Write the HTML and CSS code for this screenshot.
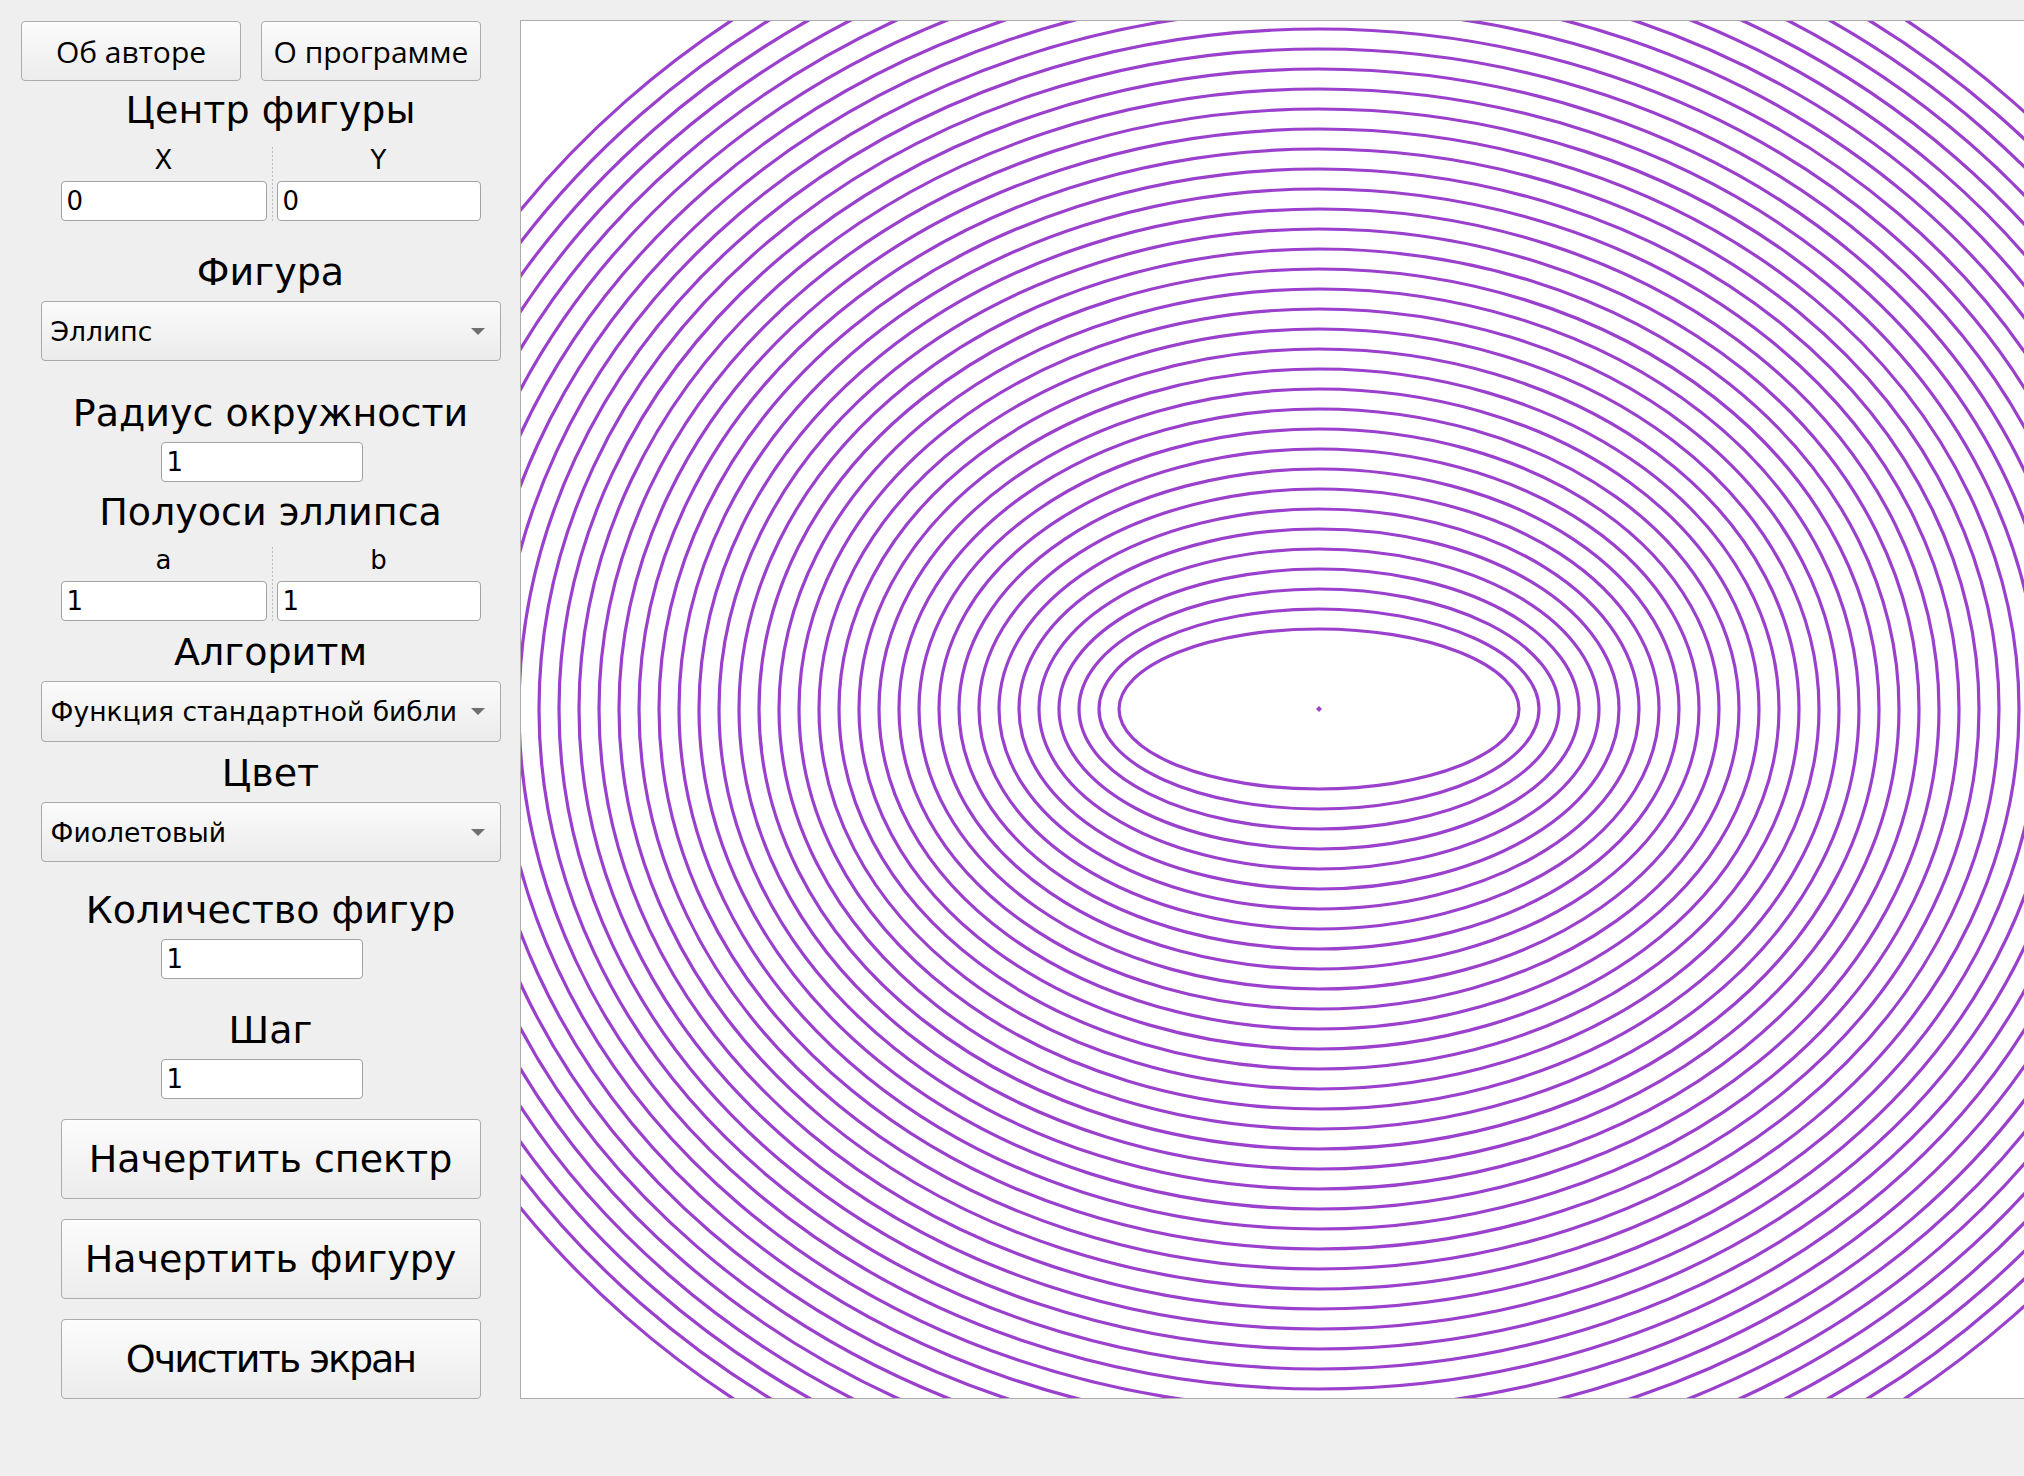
FILE: index.html
```html
<!DOCTYPE html>
<html lang="ru">
<head>
<meta charset="utf-8">
<title>Спектр фигур</title>
<link rel="stylesheet" href="styles.css">
</head>
<body>
<div class="app">
  <aside class="panel">
    <div class="top-row">
      <button class="btn btn-small">Об авторе</button>
      <button class="btn btn-small">О программе</button>
    </div>

    <div class="title t-center">Центр фигуры</div>
    <div class="pair pair-center">
      <div class="col col-a">
        <div class="sub">X</div>
        <div class="field"><span class="val">0</span></div>
      </div>
      <div class="sep"></div>
      <div class="col col-b">
        <div class="sub">Y</div>
        <div class="field"><span class="val">0</span></div>
      </div>
    </div>

    <div class="title t-figure">Фигура</div>
    <div class="combo"><span class="combo-text">Эллипс</span><span class="arrow"></span></div>

    <div class="title t-radius">Радиус окружности</div>
    <div class="field field-single"><span class="val">1</span></div>

    <div class="title t-axes">Полуоси эллипса</div>
    <div class="pair pair-axes">
      <div class="col col-a">
        <div class="sub">a</div>
        <div class="field"><span class="val">1</span></div>
      </div>
      <div class="sep"></div>
      <div class="col col-b">
        <div class="sub">b</div>
        <div class="field"><span class="val">1</span></div>
      </div>
    </div>

    <div class="title t-algo">Алгоритм</div>
    <div class="combo combo-tall"><span class="combo-text">Функция стандартной библи</span><span class="arrow"></span></div>

    <div class="title t-color">Цвет</div>
    <div class="combo"><span class="combo-text">Фиолетовый</span><span class="arrow"></span></div>

    <div class="title t-count">Количество фигур</div>
    <div class="field field-single"><span class="val">1</span></div>

    <div class="title t-step">Шаг</div>
    <div class="field field-single"><span class="val">1</span></div>

    <div class="actions">
      <button class="btn btn-big">Начертить спектр</button>
      <button class="btn btn-big">Начертить фигуру</button>
      <button class="btn btn-big btn-tight">Очистить экран</button>
    </div>
  </aside>

  <main class="canvas">
    <svg class="drawing" width="1600" height="1377" viewBox="0 0 1600 1377" xmlns="http://www.w3.org/2000/svg">
      <g fill="none" stroke="#9a40cd" stroke-width="3.2">
        <ellipse cx="798" cy="688" rx="200" ry="80"/>
        <ellipse cx="798" cy="688" rx="220" ry="100"/>
        <ellipse cx="798" cy="688" rx="240" ry="120"/>
        <ellipse cx="798" cy="688" rx="260" ry="140"/>
        <ellipse cx="798" cy="688" rx="280" ry="160"/>
        <ellipse cx="798" cy="688" rx="300" ry="180"/>
        <ellipse cx="798" cy="688" rx="320" ry="200"/>
        <ellipse cx="798" cy="688" rx="340" ry="220"/>
        <ellipse cx="798" cy="688" rx="360" ry="240"/>
        <ellipse cx="798" cy="688" rx="380" ry="260"/>
        <ellipse cx="798" cy="688" rx="400" ry="280"/>
        <ellipse cx="798" cy="688" rx="420" ry="300"/>
        <ellipse cx="798" cy="688" rx="440" ry="320"/>
        <ellipse cx="798" cy="688" rx="460" ry="340"/>
        <ellipse cx="798" cy="688" rx="480" ry="360"/>
        <ellipse cx="798" cy="688" rx="500" ry="380"/>
        <ellipse cx="798" cy="688" rx="520" ry="400"/>
        <ellipse cx="798" cy="688" rx="540" ry="420"/>
        <ellipse cx="798" cy="688" rx="560" ry="440"/>
        <ellipse cx="798" cy="688" rx="580" ry="460"/>
        <ellipse cx="798" cy="688" rx="600" ry="480"/>
        <ellipse cx="798" cy="688" rx="620" ry="500"/>
        <ellipse cx="798" cy="688" rx="640" ry="520"/>
        <ellipse cx="798" cy="688" rx="660" ry="540"/>
        <ellipse cx="798" cy="688" rx="680" ry="560"/>
        <ellipse cx="798" cy="688" rx="700" ry="580"/>
        <ellipse cx="798" cy="688" rx="720" ry="600"/>
        <ellipse cx="798" cy="688" rx="740" ry="620"/>
        <ellipse cx="798" cy="688" rx="760" ry="640"/>
        <ellipse cx="798" cy="688" rx="780" ry="660"/>
        <ellipse cx="798" cy="688" rx="800" ry="680"/>
        <ellipse cx="798" cy="688" rx="820" ry="700"/>
        <ellipse cx="798" cy="688" rx="840" ry="720"/>
        <ellipse cx="798" cy="688" rx="860" ry="740"/>
        <ellipse cx="798" cy="688" rx="880" ry="760"/>
        <ellipse cx="798" cy="688" rx="900" ry="780"/>
        <ellipse cx="798" cy="688" rx="920" ry="800"/>
        <ellipse cx="798" cy="688" rx="940" ry="820"/>
        <ellipse cx="798" cy="688" rx="960" ry="840"/>
        <ellipse cx="798" cy="688" rx="980" ry="860"/>
      </g>
      <polygon points="798,685 801,688 798,691 795,688" fill="#9a40cd"/>
    </svg>
  </main>
</div>
</body>
</html>
```

FILE: styles.css
```css
html, body {
  margin: 0;
  padding: 0;
  background: #efefef;
  overflow: hidden;
  width: 2024px;
  height: 1476px;
}

.app {
  display: flex;
  align-items: flex-start;
  padding-top: 20px;
  padding-left: 21px;
  font-family: "DejaVu Sans", Verdana, sans-serif;
  color: #000;
}

.panel {
  width: 499px;
  flex: 0 0 499px;
  display: flex;
  flex-direction: column;
  align-items: center;
}

.top-row {
  align-self: flex-start;
  display: flex;
  gap: 20px;
  margin-top: 1px;
}

.btn {
  font-family: "DejaVu Sans", sans-serif;
  color: #000;
  border: 1px solid #acacac;
  border-radius: 4px;
  background: linear-gradient(#fcfcfc, #ececec);
  padding: 0;
  margin: 0;
  box-sizing: border-box;
}

.btn-small {
  width: 220px;
  height: 60px;
  font-family: "Open Sans", "Noto Sans", sans-serif;
  font-size: 30px;
}

.title {
  font-size: 38px;
  line-height: 44px;
  height: 44px;
  text-align: center;
  white-space: nowrap;
}

.t-center { margin-top: 7px; }
.t-figure { margin-top: 29px; }
.t-radius { margin-top: 30px; }
.t-axes { margin-top: 8px; }
.t-algo { margin-top: 9px; }
.t-color { margin-top: 9px; }
.t-count { margin-top: 26px; }
.t-step { margin-top: 29px; }

.pair {
  display: flex;
  width: 420px;
}

.pair-center { margin-top: 12px; }
.pair-axes { margin-top: 10px; }

.col {
  display: flex;
  flex-direction: column;
  align-items: stretch;
}

.col-a { width: 206px; }
.col-b { width: 204px; }

.sep {
  width: 10px;
  margin-top: 3px;
  background-image: linear-gradient(#bdbdbd 50%, transparent 50%);
  background-size: 1px 4px;
  background-repeat: repeat-y;
  background-position: 5px 0;
}

.sub {
  font-size: 26px;
  line-height: 32px;
  height: 32px;
  text-align: center;
  margin-bottom: 5px;
}

.field {
  height: 40px;
  box-sizing: border-box;
  border: 1px solid #a3a3a3;
  border-radius: 4px;
  background: #fff;
  display: flex;
  align-items: center;
  padding-left: 5px;
  font-size: 26px;
}

.field-single {
  width: 202px;
  margin-top: 7px;
  margin-right: 18px;
}

.combo {
  width: 460px;
  height: 60px;
  box-sizing: border-box;
  border: 1px solid #a9a9a9;
  border-radius: 4px;
  background: linear-gradient(#fbfbfb, #ebebeb);
  display: flex;
  align-items: center;
  justify-content: space-between;
  padding: 0 15px 0 9px;
  margin-top: 7px;
  font-size: 26.6px;
}

.combo-tall { height: 61px; }

.arrow {
  width: 0;
  height: 0;
  border-left: 7px solid transparent;
  border-right: 7px solid transparent;
  border-top: 7px solid #707070;
}

.actions {
  display: flex;
  flex-direction: column;
  gap: 20px;
  margin-top: 20px;
}

.btn-big {
  width: 420px;
  height: 80px;
  font-size: 38px;
}

.btn-tight { letter-spacing: -2px; }

.canvas {
  flex: 0 0 auto;
  border: 1px solid #acacac;
  background: #fff;
  width: 1600px;
  height: 1377px;
}

.drawing {
  display: block;
}
```
